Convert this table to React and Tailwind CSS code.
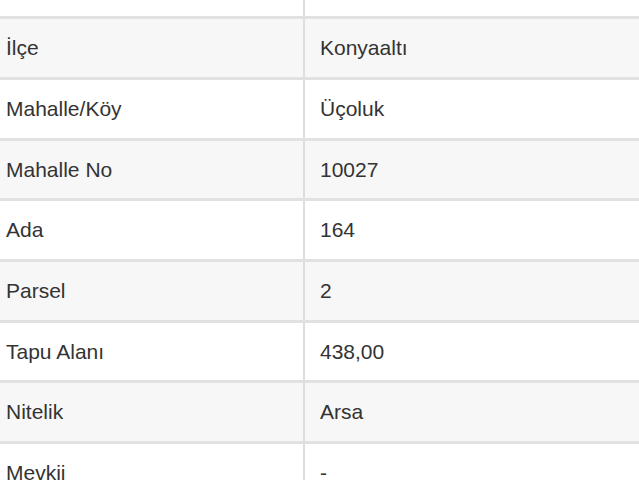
const rows = [
  { label: "İl", value: "Antalya" },
  { label: "İlçe", value: "Konyaaltı" },
  { label: "Mahalle/Köy", value: "Üçoluk" },
  { label: "Mahalle No", value: "10027" },
  { label: "Ada", value: "164" },
  { label: "Parsel", value: "2" },
  { label: "Tapu Alanı", value: "438,00" },
  { label: "Nitelik", value: "Arsa" },
  { label: "Mevkii", value: "-" },
];

export default function App() {
  return (
    <div
      className="w-[639px] h-[480px] overflow-hidden bg-white text-[#333] text-[21px]"
      style={{ fontFamily: '"Liberation Sans", Arial, sans-serif' }}
    >
      <div className="-mt-[41.5px]">
        {rows.map((row, i) => (
          <div
            key={row.label}
            className={`flex h-[60.7px] border-b-[3px] border-[#e1e1e1] ${
              i % 2 === 1 ? "bg-[#f7f7f7]" : "bg-white"
            }`}
          >
            <div className="w-[305px] shrink-0 flex items-center pl-[6px] border-r-2 border-[#dedede]">
              {row.label}
            </div>
            <div className="flex-1 flex items-center pl-[15px]">{row.value}</div>
          </div>
        ))}
      </div>
    </div>
  );
}
